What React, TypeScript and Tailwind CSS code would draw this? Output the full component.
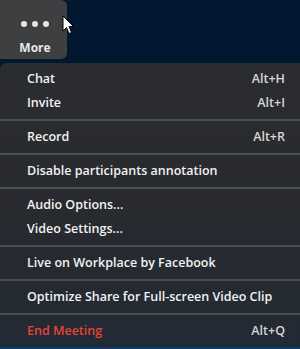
const FONT = { fontFamily: '"Open Sans", "Noto Sans", sans-serif' };

type Item = { label: string; shortcut?: string; danger?: boolean };

const GROUPS: Item[][] = [
  [
    { label: "Chat", shortcut: "Alt+H" },
    { label: "Invite", shortcut: "Alt+I" },
  ],
  [{ label: "Record", shortcut: "Alt+R" }],
  [{ label: "Disable participants annotation" }],
  [{ label: "Audio Options..." }, { label: "Video Settings..." }],
  [{ label: "Live on Workplace by Facebook" }],
  [{ label: "Optimize Share for Full-screen Video Clip" }],
  [{ label: "End Meeting", shortcut: "Alt+Q", danger: true }],
];

export default function App() {
  return (
    <div className="w-[300px] h-[349px] overflow-hidden bg-[#021730] flex flex-col" style={FONT}>
      {/* toolbar strip with the More button */}
      <div className="h-[63px] shrink-0 relative">
        <div className="w-[67px] h-[59px] bg-[#3e3f41] rounded-r-md flex flex-col items-center pt-[21px]">
          <div className="flex gap-[5px] pl-[3px]">
            <span className="w-[6px] h-[6px] rounded-full bg-[#e6e6e6]" />
            <span className="w-[6px] h-[6px] rounded-full bg-[#e6e6e6]" />
            <span className="w-[6px] h-[6px] rounded-full bg-[#e6e6e6]" />
          </div>
          <span className="mt-[15px] pl-[3px] text-[12px] font-bold text-[#e8e8e8] leading-none">More</span>
        </div>
        {/* mouse cursor */}
        <svg className="absolute left-[62px] top-[15px]" width="12" height="20" viewBox="0 0 12 20">
          <path d="M1 1 L1 16 L4.5 12.5 L7 18.5 L9.5 17.5 L7 11.5 L11.5 11.5 Z" fill="#fff" stroke="#000" strokeWidth="1" strokeLinejoin="round" />
        </svg>
      </div>

      {/* menu */}
      <div className="flex-1 bg-gradient-to-b from-[#2b2c2f] via-[#282a2f] to-[#222a33] rounded-tl-md border-b-2 border-[#0b3a6b]">
        {GROUPS.map((group, gi) => (
          <div key={gi} className={gi > 0 ? "border-t-2 border-[#4b4e53]" : ""}>
            <div className="py-[4px]">
              {group.map((item) => (
                <div key={item.label} className="h-[24px] flex items-center justify-between pl-[27px] pr-[15px]">
                  <span
                    className={
                      "text-[12.5px] font-semibold " + (item.danger ? "text-[#e8423c]" : "text-[#f2f2f2]")
                    }
                  >
                    {item.label}
                  </span>
                  {item.shortcut && (
                    <span className="text-[12.5px] font-semibold text-[#d6d6d6]">{item.shortcut}</span>
                  )}
                </div>
              ))}
            </div>
          </div>
        ))}
      </div>
    </div>
  );
}
